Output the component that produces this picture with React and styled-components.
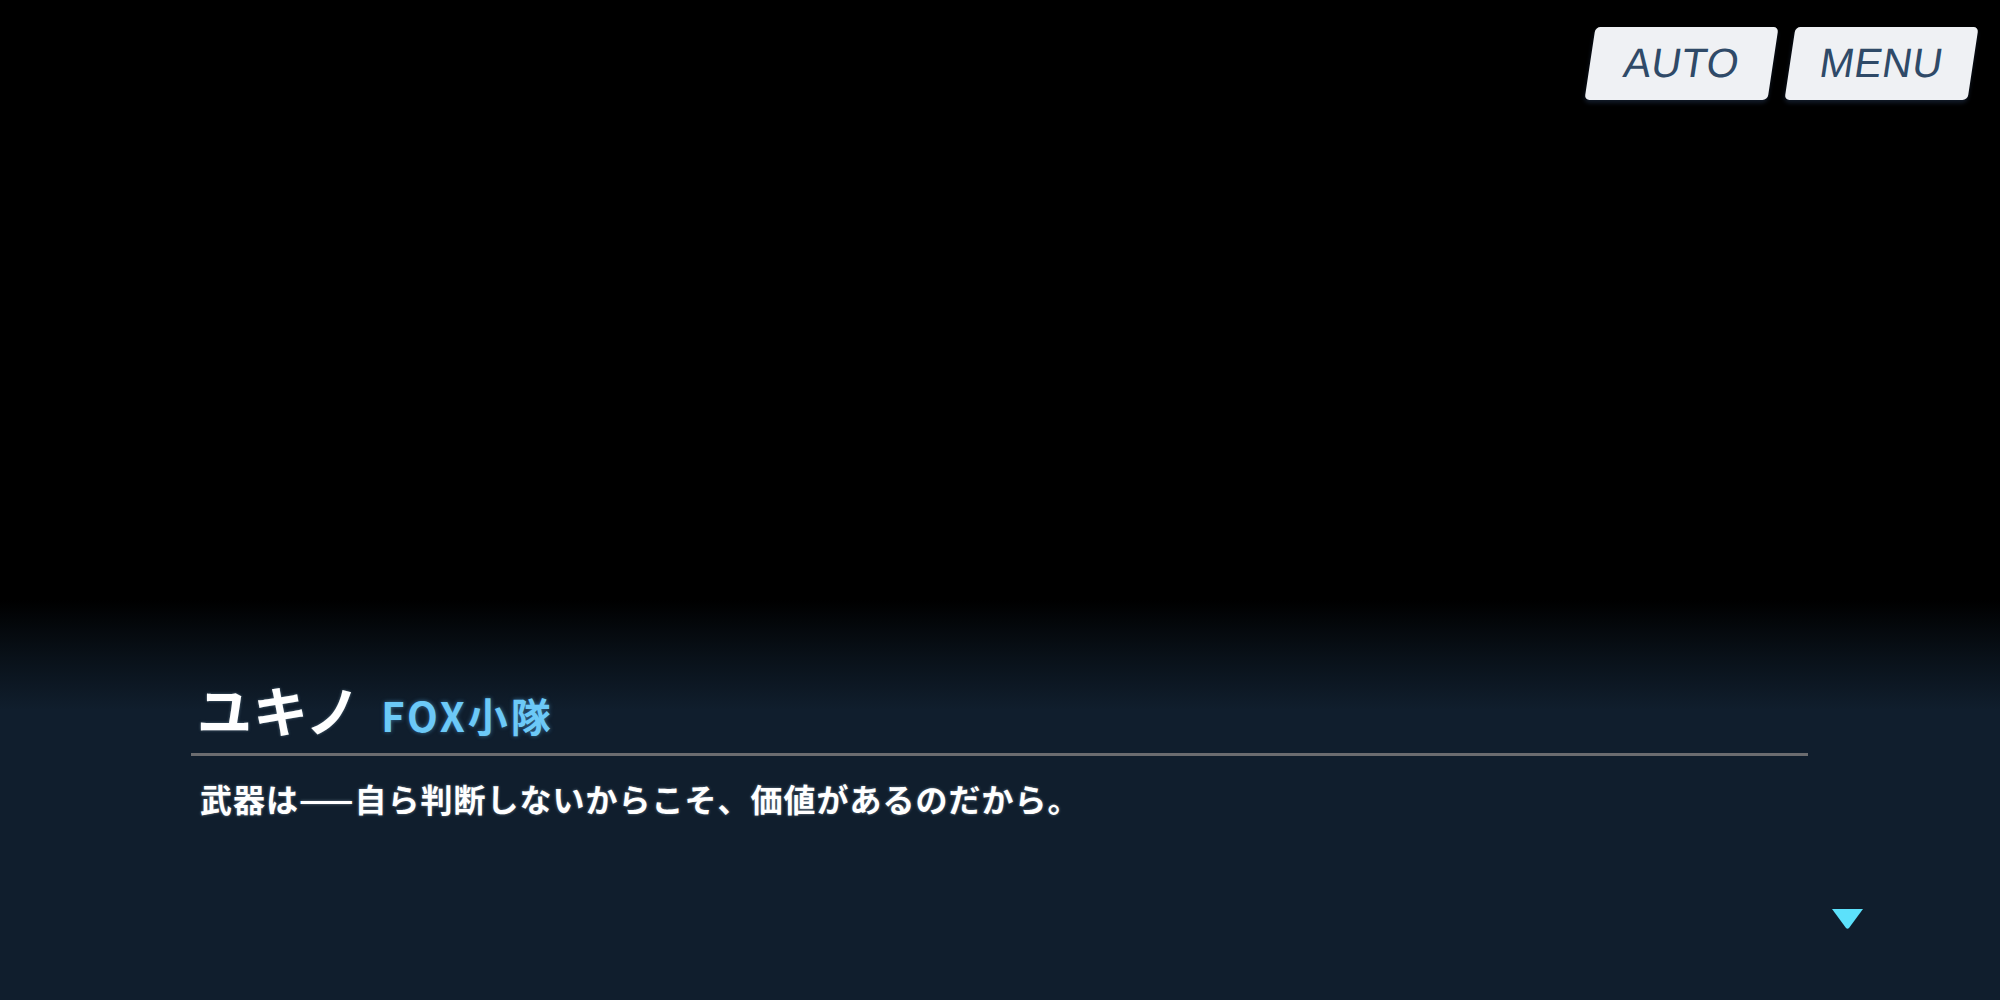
import React from "react";
import styled, { createGlobalStyle } from "styled-components";

const Global = createGlobalStyle`
  html, body { margin: 0; padding: 0; background: #000; }
  body { width: 2000px; height: 1000px; overflow: hidden; font-family: "Noto Sans CJK JP", "Noto Sans", sans-serif; }
  #root { width: 2000px; height: 1000px; }
`;

const Screen = styled.div`
  width: 2000px;
  height: 1000px;
  background: #000;
  display: flex;
  flex-direction: column;
  justify-content: space-between;
`;

const Toolbar = styled.div`
  display: flex;
  justify-content: flex-end;
  gap: 17px;
  padding: 27px 27px 0 0;
`;

const SkewButton = styled.button`
  width: 183px;
  height: 73px;
  border: none;
  border-radius: 5px;
  background: #eff1f4;
  color: #2f4a68;
  font-family: "Liberation Sans", Arial, sans-serif;
  font-size: 41px;
  font-style: normal;
  font-weight: 400;
  letter-spacing: 0.5px;
  transform: skewX(-8.6deg);
  box-shadow: 0 3px 4px rgba(40, 60, 90, 0.45);
  display: flex;
  align-items: center;
  justify-content: center;
  padding: 0;
  cursor: pointer;
`;

const Panel = styled.div`
  height: 410px;
  background: linear-gradient(
    to bottom,
    rgba(16, 30, 44, 0) 0px,
    rgba(16, 30, 44, 0) 10px,
    rgba(12, 23, 34, 0.7) 65px,
    rgba(16, 30, 45, 1) 120px,
    #101e2d 100%
  );
  display: flex;
  flex-direction: column;
  padding: 0 192px 0 191px;
`;

const NameRow = styled.div`
  display: flex;
  align-items: baseline;
  gap: 20px;
  padding: 80px 0 7px 6px;
  height: 76px;
  box-sizing: content-box;
`;

const Name = styled.span`
  color: #ffffff;
  font-size: 55px;
  font-weight: 700;
  line-height: 76px;
  letter-spacing: 1px;
  text-shadow: 0 0 3px rgba(150, 190, 220, 0.6), 0 0 2px rgba(0, 0, 0, 0.8);
`;

const Affiliation = styled.span`
  color: #6cc9f7;
  font-size: 40px;
  font-weight: 700;
  line-height: 76px;
  letter-spacing: 3px;
  text-shadow: 0 0 4px rgba(90, 180, 240, 0.55);
`;

const Divider = styled.div`
  height: 3px;
  background: #6b6c6f;
`;

const Line = styled.p`
  margin: 0;
  padding: 18px 0 0 9px;
  color: #ffffff;
  font-size: 32px;
  font-weight: 700;
  line-height: 48px;
  letter-spacing: 1px;
  text-shadow: 0 0 3px rgba(160, 190, 215, 0.7), 0 0 2px rgba(0, 0, 0, 0.9);
`;

const IndicatorRow = styled.div`
  display: flex;
  justify-content: flex-end;
  margin-right: -55px;
  padding-top: 87px;
`;

const NextArrow = styled.svg`
  width: 31px;
  height: 20px;
  display: block;
`;

export default function App() {
  return (
    <>
      <Global />
      <Screen>
        <Toolbar>
          <SkewButton>AUTO</SkewButton>
          <SkewButton>MENU</SkewButton>
        </Toolbar>
        <Panel>
          <NameRow>
            <Name>ユキノ</Name>
            <Affiliation>FOX小隊</Affiliation>
          </NameRow>
          <Divider />
          <Line>武器は——自ら判断しないからこそ、価値があるのだから。</Line>
          <IndicatorRow>
            <NextArrow viewBox="0 0 31 20">
              <path d="M0 0 H31 L17 19 Q15.5 20.5 14 19 Z" fill="#5ce1fb" />
            </NextArrow>
          </IndicatorRow>
        </Panel>
      </Screen>
    </>
  );
}
